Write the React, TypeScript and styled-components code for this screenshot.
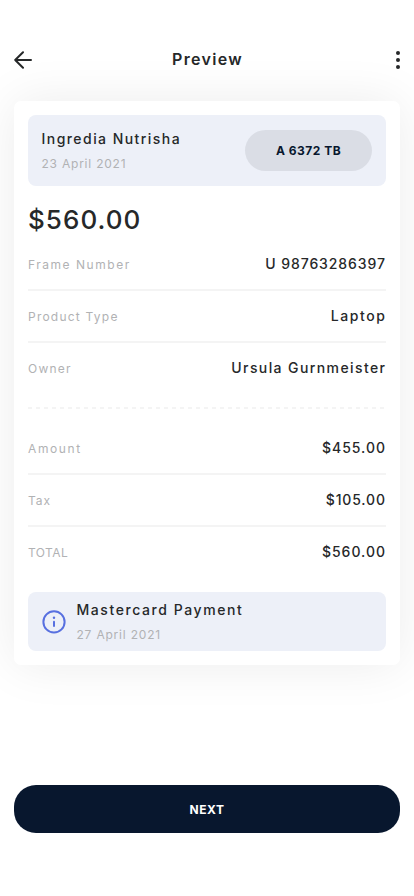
import React from "react";
import styled, { createGlobalStyle } from "styled-components";

const GlobalStyle = createGlobalStyle`
  * { box-sizing: border-box; }
  body {
    margin: 0;
    background: #fff;
    font-family: Inter, "Noto Sans", sans-serif;
    color: #262829;
  }
`;

const Screen = styled.main`
  display: flex;
  flex-direction: column;
  width: 414px;
  height: 896px;
  padding: 40px 14px 63px;
  overflow: hidden;
`;

const Header = styled.header`
  display: flex;
  align-items: center;
  justify-content: space-between;
  height: 39px;
  margin-bottom: 22px;
`;

const IconButton = styled.button`
  display: flex;
  padding: 0;
  border: 0;
  background: none;
  color: #262829;
`;

const Title = styled.h1`
  margin: 0;
  padding: 0 0 1px 1px;
  font-size: 16px;
  line-height: 24px;
  font-weight: 600;
  letter-spacing: 1.3px;
`;

const Card = styled.section`
  display: flex;
  flex-direction: column;
  height: 564px;
  padding: 14px;
  border-radius: 7px;
  background: #fff;
  box-shadow: 0 0 50px rgba(0, 0, 0, 0.08);
`;

const Panel = styled.div<{ $height: number }>`
  display: flex;
  flex-shrink: 0;
  align-items: center;
  gap: 11px;
  height: ${(p) => p.$height}px;
  padding: 0 14px 0 13.5px;
  border-radius: 8px;
  background: #edf0f8;
`;

const PanelText = styled.div`
  display: flex;
  flex: 1;
  flex-direction: column;
  gap: 3px;
`;

const Strong = styled.span<{ $track: number }>`
  font-size: 14px;
  line-height: 22px;
  font-weight: 500;
  letter-spacing: ${(p) => p.$track}px;
  white-space: nowrap;
`;

const Value = styled(Strong)`
  margin-right: ${(p) => 1 - p.$track}px;
`;

const Muted = styled.span<{ $track: number }>`
  font-size: 12px;
  line-height: 21px;
  font-weight: 400;
  letter-spacing: ${(p) => p.$track}px;
  color: #b1b2b4;
  white-space: nowrap;
`;

const Pill = styled.div`
  display: flex;
  align-items: center;
  justify-content: center;
  width: 127px;
  height: 41px;
  border-radius: 21px;
  background: #dadde5;
  color: #08172e;
  font-size: 12px;
  font-weight: 700;
  letter-spacing: 0.5px;
`;

const Amount = styled.div`
  height: 53px;
  padding: 15px 0 0;
  font-size: 26px;
  line-height: 38px;
  font-weight: 500;
  letter-spacing: 1.05px;
`;

const Rows = styled.div`
  display: flex;
  flex-direction: column;
`;

const Row = styled.div`
  display: flex;
  align-items: center;
  justify-content: space-between;
  height: 52px;
  border-bottom: 2px solid #f4f4f4;

  &:last-child {
    height: 50px;
    border-bottom: 0;
  }
`;

const Perforation = styled.div`
  flex-shrink: 0;
  height: 2px;
  margin: 14px 0;
  background: repeating-linear-gradient(90deg, #f4f4f4 0 4px, transparent 4px 8px);
`;

const Payment = styled.div`
  margin-top: 15px;
`;

const NextButton = styled.button`
  height: 48px;
  margin-top: auto;
  border: 0;
  border-radius: 22px;
  background: #08172e;
  color: #fff;
  font-family: inherit;
  font-size: 12px;
  font-weight: 700;
  letter-spacing: 0.56px;
`;

type Entry = { label: string; value: string; labelTrack: number; valueTrack: number };

const details: Entry[] = [
  { label: "Frame Number", value: "U 98763286397", labelTrack: 1.53, valueTrack: 0.92 },
  { label: "Product Type", value: "Laptop", labelTrack: 1.23, valueTrack: 1.6 },
  { label: "Owner", value: "Ursula Gurnmeister", labelTrack: 1.2, valueTrack: 1.4 },
];

const totals: Entry[] = [
  { label: "Amount", value: "$455.00", labelTrack: 1.6, valueTrack: 0.98 },
  { label: "Tax", value: "$105.00", labelTrack: 0.95, valueTrack: 0.85 },
  { label: "TOTAL", value: "$560.00", labelTrack: 0.45, valueTrack: 0.99 },
];

function EntryList({ entries }: { entries: Entry[] }) {
  return (
    <Rows>
      {entries.map((e) => (
        <Row key={e.label}>
          <Muted $track={e.labelTrack}>{e.label}</Muted>
          <Value $track={e.valueTrack}>{e.value}</Value>
        </Row>
      ))}
    </Rows>
  );
}

export default function App() {
  return (
    <>
      <GlobalStyle />
      <Screen>
        <Header>
          <IconButton aria-label="Back">
            <svg width="18" height="18" viewBox="0 0 18 18" fill="none" stroke="currentColor" strokeWidth="2" strokeLinecap="round" strokeLinejoin="round">
              <path d="M17 9H1.2M9 1.2L1.2 9L9 16.8" />
            </svg>
          </IconButton>
          <Title>Preview</Title>
          <IconButton aria-label="More">
            <svg width="18" height="18" viewBox="0 0 18 18" fill="currentColor">
              <circle cx="16" cy="2" r="2" />
              <circle cx="16" cy="9" r="2" />
              <circle cx="16" cy="16" r="2" />
            </svg>
          </IconButton>
        </Header>

        <Card>
          <Panel $height={71}>
            <PanelText>
              <Strong $track={1.45}>Ingredia Nutrisha</Strong>
              <Muted $track={0.78}>23 April 2021</Muted>
            </PanelText>
            <Pill>A 6372 TB</Pill>
          </Panel>
          <Amount>$560.00</Amount>
          <EntryList entries={details} />
          <Perforation />
          <EntryList entries={totals} />
          <Payment>
            <Panel $height={59}>
              <svg width="24" height="24" viewBox="0 0 24 24" fill="none" stroke="#5870e0" strokeWidth="2" strokeLinecap="round">
                <circle cx="12" cy="11.9" r="10.6" />
                <path d="M12 11.8V16" />
                <circle cx="12" cy="7.8" r="1.2" fill="#5870e0" stroke="none" />
              </svg>
              <PanelText>
                <Strong $track={1.57}>Mastercard Payment</Strong>
                <Muted $track={0.8}>27 April 2021</Muted>
              </PanelText>
            </Panel>
          </Payment>
        </Card>

        <NextButton>NEXT</NextButton>
      </Screen>
    </>
  );
}
